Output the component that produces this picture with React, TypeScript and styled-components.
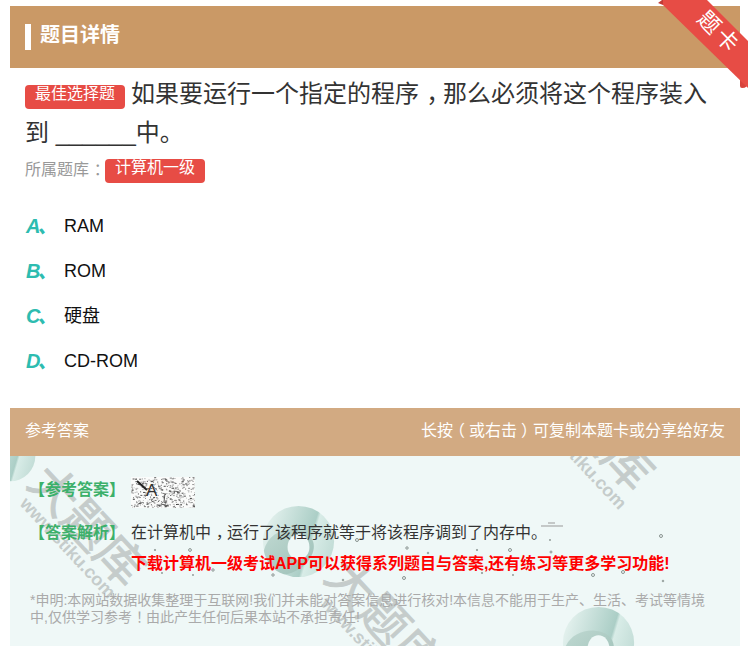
import React from "react";
import styled, { createGlobalStyle } from "styled-components";

const Global = createGlobalStyle`
  html, body { margin: 0; padding: 0; background: #fff; overflow: hidden; }
  body { font-family: "Liberation Sans", "Noto Sans CJK SC", sans-serif; }
`;

const Page = styled.div`
  position: relative;
  width: 750px;
  height: 646px;
  overflow: hidden;
  padding: 6px 10px 0;
  box-sizing: border-box;
`;
const TitleBar = styled.div`
  height: 62px;
  background: #ca9966;
  display: flex;
  align-items: center;
  padding-left: 15px;
  gap: 9px;
`;
const TitleMark = styled.span`
  width: 6px;
  height: 26px;
  background: #fff;
`;
const TitleText = styled.span`
  color: #fff;
  font-size: 20px;
  font-weight: 700;
  line-height: 26px;
  margin-bottom: 4px;
`;
const Ribbon = styled.div`
  position: absolute;
  top: 0;
  right: 0;
  width: 100px;
  height: 100px;
  pointer-events: none;
`;
const RibbonText = styled.span`
  position: absolute;
  left: 44px;
  top: 20px;
  color: #fff;
  font-size: 22px;
  line-height: 24px;
  letter-spacing: 3px;
  white-space: nowrap;
  transform: rotate(45deg);
  transform-origin: 24px 12px;
`;
const Question = styled.div`
  padding: 6px 15px 0;
  font-size: 24px;
  line-height: 39px;
  color: #333;
`;
const Tag = styled.span`
  display: inline-block;
  background: #e74c45;
  color: #fff;
  font-size: 16px;
  line-height: 17px;
  height: 24px;
  padding: 0 10px;
  border-radius: 4px;
`;
const QuestionTag = styled(Tag)`
  margin-right: 6px;
  vertical-align: 3px;
`;
const Punct = styled.span<{ $shift: number }>`
  display: inline-block;
  transform: translateX(${(p) => p.$shift}em);
`;
const Bank = styled.div`
  display: flex;
  align-items: center;
  height: 24px;
  margin-top: 7px;
  padding-left: 15px;
  font-size: 16px;
  color: #999;
`;
const BankLabel = styled.span`
  margin-top: -2px;
  line-height: 24px;
`;
const Options = styled.div`
  display: flex;
  flex-direction: column;
  margin-top: 20px;
  padding-left: 16px;
`;
const Option = styled.div`
  display: flex;
  align-items: center;
  height: 45px;
`;
const OptionKey = styled.span`
  width: 38px;
  color: #2dbcb0;
  font-size: 20px;
  line-height: 24px;
  font-weight: 700;
  font-style: italic;
  letter-spacing: -3px;
`;
const OptionText = styled.span`
  color: #111;
  font-size: 18px;
  line-height: 24px;
`;
const AnswerBar = styled.div`
  margin-top: 25px;
  height: 48px;
  box-sizing: border-box;
  background: #d2aa82;
  color: #fff;
  font-size: 16px;
  display: flex;
  align-items: center;
  justify-content: space-between;
  padding: 0 15px 6px;
`;
const AnswerBody = styled.div`
  position: relative;
  height: 190px;
  background: #eff8f7;
  overflow: hidden;
  padding-top: 20px;
  box-sizing: border-box;
`;
const Row = styled.div`
  position: relative;
  display: flex;
  align-items: center;
  padding-left: 19px;
  font-size: 16px;
  color: #333;
`;
const AnswerRow = styled(Row)`
  height: 32px;
`;
const AnalysisRow = styled(Row)`
  height: 32px;
  margin-top: 7px;
`;
const Label = styled.span<{ $up?: boolean }>`
  width: 102px;
  flex: none;
  color: #3cb06a;
  font-weight: 700;
  margin-top: ${(p) => (p.$up ? "-8px" : "-1px")};
`;
const Chip = styled.span`
  position: relative;
  width: 64px;
  height: 31px;
  background: #fbfcfb;
  overflow: hidden;
`;
const ChipNoise = styled.svg`
  position: absolute;
  left: 0;
  top: 0;
`;
const ChipLetter = styled.span`
  position: absolute;
  left: 15px;
  top: 0;
  line-height: 28px;
  font-size: 17px;
  color: #333;
`;
const Promo = styled.div`
  position: relative;
  margin-top: 2px;
  padding-left: 121px;
  height: 30px;
  line-height: 30px;
  color: #f00;
  font-size: 16px;
  font-weight: 700;
  white-space: nowrap;
`;
const Disclaimer = styled.div`
  position: relative;
  margin-top: 13px;
  padding: 0 30px 0 20px;
  color: #aaa;
  font-size: 14px;
  line-height: 17px;
`;
const WaterText = styled.span<{ $x: number; $y: number }>`
  position: absolute;
  left: ${(p) => p.$x}px;
  top: ${(p) => p.$y}px;
  font-size: 48px;
  line-height: 1;
  color: #c5cccb;
  -webkit-text-stroke: 0.8px #c5cccb;
  white-space: nowrap;
  transform: rotate(47deg);
  transform-origin: 0 0;
`;
const WaterUrl = styled(WaterText)`
  font-size: 18px;
  font-weight: 700;
  -webkit-text-stroke: 0;
`;
const Ring = styled.svg<{ $x: number; $y: number; $s: number }>`
  position: absolute;
  left: ${(p) => p.$x}px;
  top: ${(p) => p.$y}px;
  width: ${(p) => p.$s}px;
  height: ${(p) => p.$s}px;
`;
const Speckles = styled.svg`
  position: absolute;
  left: 0;
  top: 0;
`;

const RingMark = ({ x, y, s, id, solid }: { x: number; y: number; s: number; id: string; solid?: boolean }) => (
  <Ring $x={x} $y={y} $s={s} viewBox="0 0 80 80">
    <defs>
      <linearGradient id={`${id}a`} x1="0" y1="0.2" x2="1" y2="0.5">
        <stop offset="0" stopColor="#e8f4f1" />
        <stop offset="0.68" stopColor="#abcec6" />
        <stop offset="0.72" stopColor="#d8ece7" />
        <stop offset="1" stopColor="#c4ded8" />
      </linearGradient>
      <linearGradient id={`${id}b`} x1="0" y1="0" x2="1" y2="1">
        <stop offset="0" stopColor="#c0d9d2" />
        <stop offset="1" stopColor="#9cbfb6" />
      </linearGradient>
    </defs>
    <circle cx="40" cy="40" r="39" fill={`url(#${id}a)`} />
    {!solid && (
      <>
        <path d="M2 50 C6 34 20 26 36 27 C52 28 62 40 54 56 C48 68 34 76 24 76 C12 72 4 62 2 50Z" fill={`url(#${id}b)`} />
        <ellipse cx="40" cy="46" rx="12" ry="14" fill="#eff8f7" />
      </>
    )}
  </Ring>
);

const seeded = (n: number, w: number, h: number) => {
  let s = 17;
  const next = () => {
    s = (s * 7919 + 31) % 10007;
    return s / 10007;
  };
  return Array.from({ length: n }, () => ({
    x: next() * w,
    y: next() * h,
    g: 60 + Math.floor(next() * 140),
    size: next() > 0.7 ? 2 : 1,
  }));
};

const chipDots = seeded(420, 64, 31);

const specks: [number, number, number][] = [
  [651, 536, 1.5], [540, 540, 0.6], [541, 552, 1], [583, 575, 1.5], [613, 572, 1.5], [653, 581, 0.8],
  [347, 540, 1.5], [263, 575, 1.2], [333, 580, 0.8], [394, 578, 1.5], [418, 553, 0.8], [295, 563, 0.8],
  [145, 550, 0.7], [180, 550, 1.4], [203, 570, 1.2], [152, 573, 0.6], [183, 575, 0.6], [397, 548, 1.2],
  [467, 550, 0.7], [500, 550, 1.5], [472, 573, 0.7], [503, 575, 0.6],
];

export default function App() {
  return (
    <Page>
      <Global />
      <TitleBar>
        <TitleMark />
        <TitleText>题目详情</TitleText>
      </TitleBar>
      <Ribbon>
        <svg width="100" height="100" viewBox="0 0 100 100">
          <path d="M8 3 L13 5 L18 0 L12 0 Z" fill="#c23b35" />
          <path d="M90 80 L98 80 L98 82 Q98 88 92 88 Q90 88 90 86 Z" fill="#d8433c" />
          <path d="M13 0 L57 0 L98 41 L98 88 L13 5 Z" fill="#e74c45" />
        </svg>
        <RibbonText>题卡</RibbonText>
      </Ribbon>
      <Question>
        <QuestionTag>最佳选择题</QuestionTag>如果要运行一个指定的程序<Punct $shift={0.3}>，</Punct>那么必须将这个程序装入到 ______中。
      </Question>
      <Bank>
        <BankLabel>所属题库<Punct $shift={0.3}>：</Punct></BankLabel>
        <Tag>计算机一级</Tag>
      </Bank>
      <Options>
        <Option><OptionKey>A、</OptionKey><OptionText>RAM</OptionText></Option>
        <Option><OptionKey>B、</OptionKey><OptionText>ROM</OptionText></Option>
        <Option><OptionKey>C、</OptionKey><OptionText>硬盘</OptionText></Option>
        <Option><OptionKey>D、</OptionKey><OptionText>CD-ROM</OptionText></Option>
      </Options>
      <AnswerBar>
        <span>参考答案</span>
        <span>长按<Punct $shift={-0.25}>（</Punct>或右击<Punct $shift={0.25}>）</Punct>可复制本题卡或分享给好友</span>
      </AnswerBar>
      <AnswerBody>
        <RingMark id="r1" x={-26} y={-26} s={52} solid />
        <RingMark id="r2" x={252} y={49} s={73} />
        <RingMark id="r3" x={552} y={150} s={73} />
        <WaterText $x={45} $y={1}>大题库</WaterText>
        <WaterUrl $x={20} $y={38}>www.stiku.com</WaterUrl>
        <WaterText $x={342} $y={95}>大题库</WaterText>
        <WaterUrl $x={321} $y={138}>www.stiku.com</WaterUrl>
        <WaterText $x={553} $y={-95}>大题库</WaterText>
        <WaterUrl $x={531} $y={-51}>www.stiku.com</WaterUrl>
        <Speckles width="730" height="190" viewBox="0 0 730 190">
          <path d="M531 70 H553 M538 67 H545" stroke="#999" strokeWidth="1" fill="none" />
          {specks.map(([x, y, r], i) => (
            <circle key={i} cx={x} cy={y - 456} r={r} fill="none" stroke="#8a9491" strokeWidth="1" />
          ))}
        </Speckles>
        <AnswerRow>
          <Label $up>【参考答案】</Label>
          <Chip>
            <ChipNoise width="64" height="31" viewBox="0 0 64 31">
              {chipDots.map((d, i) => (
                <rect key={i} x={d.x} y={d.y} width={d.size} height={1} fill={`rgb(${d.g},${d.g},${d.g})`} />
              ))}
              <path d="M6 4 L16 13" stroke="#222" strokeWidth="2" />
              <path d="M34 16 L33 25 M30 27 L38 29" stroke="#555" strokeWidth="1" />
            </ChipNoise>
            <ChipLetter>A</ChipLetter>
          </Chip>
        </AnswerRow>
        <AnalysisRow>
          <Label>【答案解析】</Label>
          <span>在计算机中<Punct $shift={0.3}>，</Punct>运行了该程序就等于将该程序调到了内存中。</span>
        </AnalysisRow>
        <Promo>下载计算机一级考试APP可以获得系列题目与答案,还有练习等更多学习功能!</Promo>
        <Disclaimer>*申明:本网站数据收集整理于互联网!我们并未能对答案信息进行核对!本信息不能用于生产、生活、考试等情境中,仅供学习参考<Punct $shift={0.3}>！</Punct>由此产生任何后果本站不承担责任!</Disclaimer>
      </AnswerBody>
    </Page>
  );
}
